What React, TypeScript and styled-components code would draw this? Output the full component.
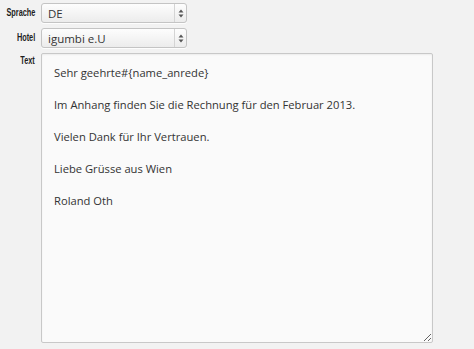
import React from 'react'
import styled, {createGlobalStyle} from 'styled-components'

const GlobalStyle = createGlobalStyle`
    html, body {
        margin:0;
        padding:0;
        background:#f2f2f2;
    }
`

const Form = styled.div`
    display:grid;
    grid-template-columns:35px 392px;
    column-gap:6px;
    row-gap:5px;
    padding-top:3px;
    font-family:"Open Sans", "Noto Sans", sans-serif;
`

const Label = styled.label<{top?: boolean}>`
    display:flex;
    justify-content:flex-end;
    align-items:${p => p.top ? 'flex-start' : 'center'};
    padding-top:${p => p.top ? '1px' : '0'};
    padding-bottom:${p => p.top ? '0' : '2px'};
    span {
        display:inline-block;
        font-family:"Liberation Sans", Arial, sans-serif;
        font-weight:bold;
        font-size:10.5px;
        color:#1e1e1e;
        white-space:nowrap;
        transform:scaleX(0.7);
        transform-origin:right center;
    }
`

const SelectBox = styled.div`
    width:146px;
    height:20px;
    box-sizing:border-box;
    display:flex;
    align-items:stretch;
    border:1px solid #c4c4c4;
    border-radius:3px;
    background:linear-gradient(#fdfdfd, #ececec);
    box-shadow:0 1px 0 rgba(255,255,255,0.8);
`

const SelectValue = styled.span`
    flex:1;
    display:flex;
    align-items:center;
    padding-left:6px;
    font-size:11.5px;
    color:#333;
`

const SelectArrows = styled.span`
    width:11px;
    display:flex;
    align-items:center;
    justify-content:center;
    border-left:1px solid #d4d4d4;
`

const TextArea = styled.textarea`
    width:392px;
    height:290px;
    box-sizing:border-box;
    margin:0;
    padding:11px 12px;
    border:1px solid #c8c8c8;
    border-radius:2px;
    background:#fafafa;
    box-shadow:inset 0 1px 2px rgba(0,0,0,0.06);
    font-family:"Open Sans", "Noto Sans", sans-serif;
    font-size:11.2px;
    line-height:16px;
    color:#333;
    outline:none;
    resize:both;
    display:block;
`

const Arrows = () => (
    <svg width="6" height="9" viewBox="0 0 6 9">
        <path d="M3 0.5 L5.5 3.5 H0.5 Z" fill="#555"/>
        <path d="M3 8.5 L5.5 5.5 H0.5 Z" fill="#555"/>
    </svg>
)

const Select = ({value}: {value: string}) => (
    <SelectBox>
        <SelectValue>{value}</SelectValue>
        <SelectArrows><Arrows/></SelectArrows>
    </SelectBox>
)

const body = `Sehr geehrte#{name_anrede}

Im Anhang finden Sie die Rechnung für den Februar 2013.

Vielen Dank für Ihr Vertrauen.

Liebe Grüsse aus Wien

Roland Oth`

const App = () => {
    return (
        <>
            <GlobalStyle/>
            <Form>
                <Label><span>Sprache</span></Label>
                <Select value="DE"/>
                <Label><span>Hotel</span></Label>
                <Select value="igumbi e.U"/>
                <Label top><span>Text</span></Label>
                <TextArea readOnly defaultValue={body}/>
            </Form>
        </>
    )
}

export default App
